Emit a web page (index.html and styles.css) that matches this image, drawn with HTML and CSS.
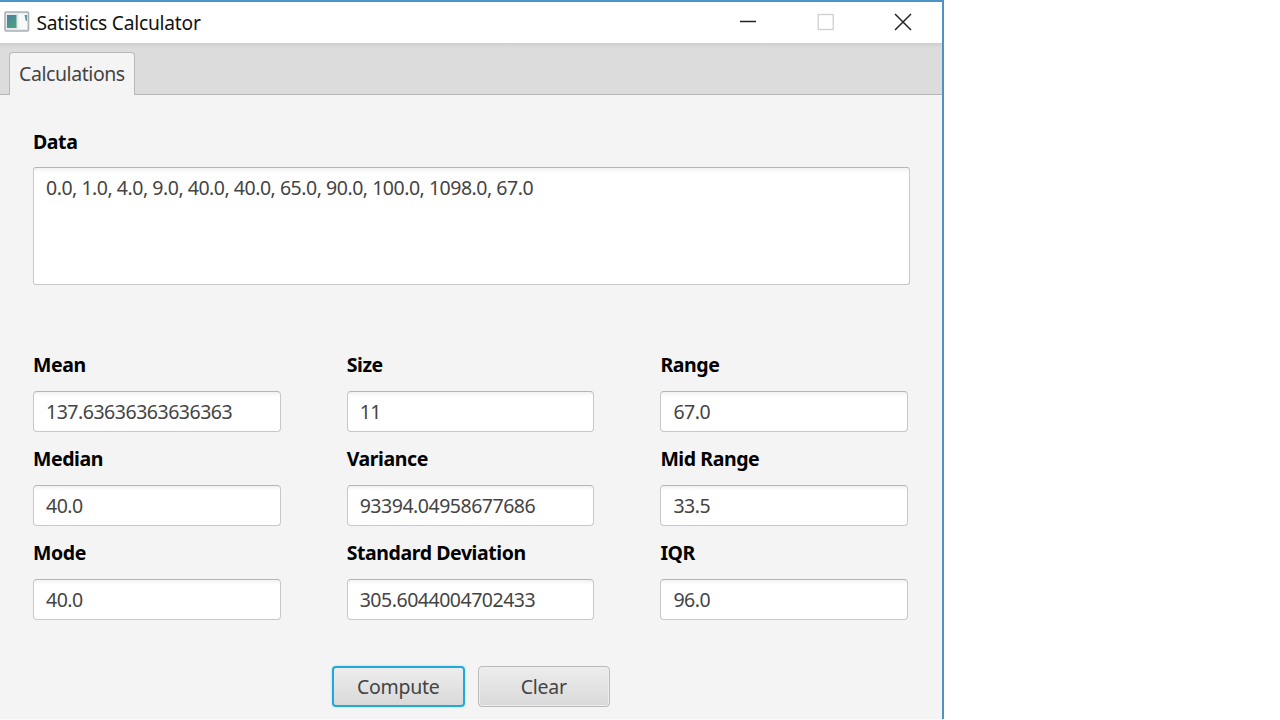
FILE: index.html
```html
<!DOCTYPE html>
<html lang="en">
<head>
<meta charset="utf-8">
<title>Satistics Calculator</title>
<link rel="stylesheet" href="styles.css">
</head>
<body>
<div class="window">
  <header class="titlebar">
    <svg class="app-icon" width="26" height="22" viewBox="0 0 26 22">
      <defs><linearGradient id="pane" x1="0" y1="0" x2="0.6" y2="1"><stop offset="0" stop-color="#4c7fa3"/><stop offset="1" stop-color="#4aa17d"/></linearGradient></defs>
      <rect x="1" y="1" width="23.500" height="19" rx="1" fill="#e6eaec" stroke="#a9b1b7" stroke-width="1.6"/>
      <rect x="3" y="4" width="9.500" height="13" fill="url(#pane)"/>
      <rect x="14.500" y="3" width="8.500" height="15" fill="#f8f9f9"/>
      <path d="M20.500 4h2.500v6h-1.200z" fill="#5b9a98"/>
    </svg>
    <span class="title">Satistics Calculator</span>
    <div class="controls">
      <svg width="18" height="18" viewBox="0 0 18 18"><path d="M1 8.500h16" stroke="#222" stroke-width="1.500"/></svg>
      <svg width="18" height="18" viewBox="0 0 18 18"><rect x="1.200" y="1.500" width="15" height="15" fill="none" stroke="#d0d0d0" stroke-width="1.300"/></svg>
      <svg width="18" height="18" viewBox="0 0 18 18"><path d="M1 1l16 16M17 1L1 17" stroke="#222" stroke-width="1.500"/></svg>
    </div>
  </header>
  <nav class="tabs"><div class="tab"><span>Calculations</span></div></nav>
  <main class="panel">
    <div class="label">Data</div>
    <div class="data-area">0.0, 1.0, 4.0, 9.0, 40.0, 40.0, 65.0, 90.0, 100.0, 1098.0, 67.0</div>
    <div class="results">
      <div class="field"><div class="label">Mean</div><div class="value">137.63636363636363</div></div>
      <div class="field"><div class="label">Size</div><div class="value">11</div></div>
      <div class="field"><div class="label">Range</div><div class="value">67.0</div></div>
      <div class="field"><div class="label">Median</div><div class="value">40.0</div></div>
      <div class="field"><div class="label">Variance</div><div class="value">93394.04958677686</div></div>
      <div class="field"><div class="label">Mid Range</div><div class="value">33.5</div></div>
      <div class="field"><div class="label">Mode</div><div class="value">40.0</div></div>
      <div class="field"><div class="label">Standard Deviation</div><div class="value">305.6044004702433</div></div>
      <div class="field"><div class="label">IQR</div><div class="value">96.0</div></div>
    </div>
    <div class="actions">
      <button class="button focused">Compute</button>
      <button class="button">Clear</button>
    </div>
  </main>
</div>
</body>
</html>
```
FILE: styles.css
```css
* { box-sizing: border-box; }
body {
  margin: 0;
  height: 720px;
  overflow: hidden;
  background: #fff;
  font-family: "Noto Sans", "Open Sans", sans-serif;
  font-size: 19.500px;
  color: #444;
}
.window {
  width: 944px;
  height: 719px;
  display: flex;
  flex-direction: column;
  border-top: 2px solid #4c93c8;
  border-right: 2px solid #4c93c8;
  background: #f4f4f4;
  box-shadow: 0 1px 0 #fbf9f6;
}
.titlebar {
  height: 41px;
  display: flex;
  align-items: center;
  padding: 0 30px 0 4px;
  background: #fff;
}
.app-icon { margin-top: -1px; }
.title {
  margin: -1px 0 0 6.500px;
  font-size: 19.200px;
  letter-spacing: -0.230px;
  color: #111;
}
.controls { display: flex; gap: 59.500px; margin: -2px 0 0 auto; }
.controls svg { display: block; }
.tabs {
  height: 52px;
  display: flex;
  align-items: flex-end;
  padding-left: 9px;
  background: linear-gradient(#cecece, #dcdcdc 5px);
  border-bottom: 1px solid #b6b6b6;
}
.tab {
  width: 126px;
  height: 43px;
  margin-bottom: -1px;
  padding-left: 9px;
  line-height: 41px;
  border: 1px solid #b8b8b8;
  border-bottom: 0;
  border-radius: 4px 4px 0 0;
  background: #f4f4f4;
  letter-spacing: -0.430px;
  white-space: nowrap;
}
.panel { padding: 34px 0 0 33px; }
.label {
  height: 26px;
  line-height: 26px;
  font-weight: 700;
  letter-spacing: -0.420px;
  color: #000;
  white-space: nowrap;
}
.data-area, .value {
  border: 1px solid #c8c8c8;
  border-top-color: #b5b5b5;
  border-radius: 4px;
  background: linear-gradient(#f2f2f2, #fff 5px);
  padding-left: 12px;
  letter-spacing: -0.480px;
  white-space: nowrap;
}
.data-area {
  width: 877px;
  height: 118px;
  margin-top: 12px;
  padding-top: 6px;
  line-height: 28px;
  border-radius: 3px;
}
.results {
  display: grid;
  grid-template-columns: repeat(3, 247.600px);
  column-gap: 66.100px;
  row-gap: 14px;
  margin-top: 67px;
}
.field { height: 80px; }
.value { height: 41px; line-height: 39px; margin-top: 13px; }
.actions { display: flex; gap: 13px; margin: 46px 0 0 299px; }
.button {
  width: 132.500px;
  height: 41px;
  padding: 0;
  font: inherit;
  letter-spacing: -0.260px;
  color: #444;
  border: 1px solid #b9b9b9;
  border-radius: 4px;
  background: linear-gradient(#ededed, #d9d9d9);
  box-shadow: inset 0 0 0 1px #eee;
}
.focused {
  border: 2px solid #22a9d8;
  box-shadow: 0 0 2px #8cd5ec;
}
```
